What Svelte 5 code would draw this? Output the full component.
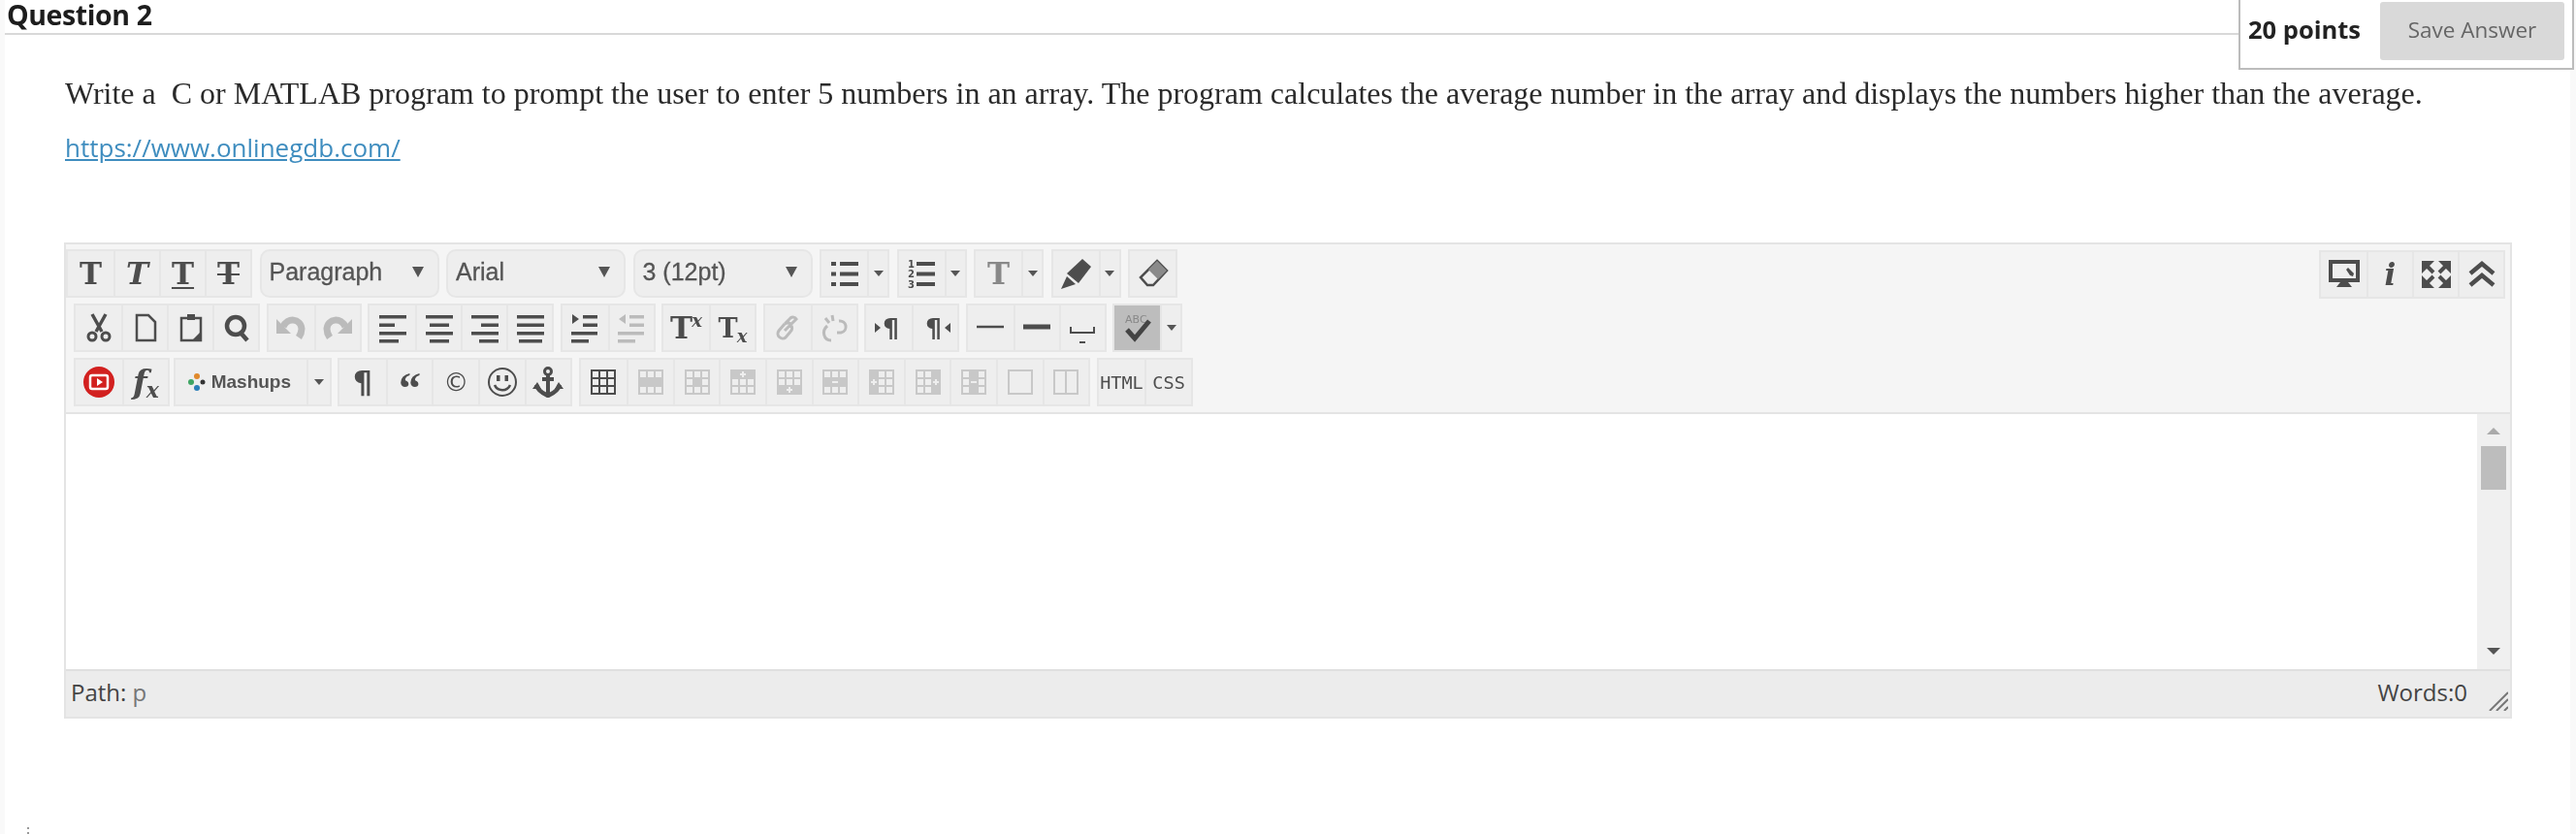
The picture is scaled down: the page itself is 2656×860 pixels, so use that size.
<script>
  const bars = (a, h = 3.5) => ({ d: a.map(([x, y, w]) => `M${x} ${y}h${w}v${h}h-${w}z`).join('') });
  const ys = [3, 11.5, 20, 28];
  const rows = (xs) => bars(xs.map(([x, w], i) => [x, ys[i], w]));
  const num = (t, x, y) => ({ t, x, y, s: 10, b: 1 });

  function grid(gray = [], sym = '') {
    const cols = [5, 13, 21], rws = [5, 13, 21];
    const cells = [];
    rws.forEach((y, r) => cols.forEach((x, c) => {
      if (!gray.includes(r * 3 + c)) cells.push(`M${x} ${y}h6v6h-6z`);
    }));
    const out = [{ d: 'M3 3h26v26H3z' }, { d: cells.join(''), f: '#eee' }];
    if (sym) out.push({ d: sym, f: '#eee' });
    return out;
  }
  const plus = (x, y) => `M${x - 1} ${y - 3}h2v2h2v2h-2v2h-2v-2h-2v-2h2z`;
  const minus = (x, y) => `M${x - 3} ${y - 1}h6v2h-6z`;

  const icons = {
    cut: [{ d: 'M9 2L19 20M23 2L13 20', w: 3.5 }, { d: 'M13 25a4 4 0 1 1-8 0a4 4 0 1 1 8 0M27 25a4 4 0 1 1-8 0a4 4 0 1 1 8 0', w: 3 }],
    page: [{ d: 'M7 3h12l7 7v19H7z', w: 2.5 }],
    paste: [{ d: 'M6 6h20v23H6z', w: 2.5 }, { d: 'M12 2h8v6h-8z' }, { d: 'M26 20v9h-9z' }],
    search: [{ d: 'M24 14a9 9 0 1 1-18 0a9 9 0 1 1 18 0M20 21l7 8', w: 4.5 }],
    undo: [{ d: 'M8 15C12 5 26 6 27 17C27 21 26 23 24 26', w: 7 }, { d: 'M1 7V22H16z' }],
    redo: [{ d: 'M24 15C20 5 6 6 5 17C5 21 6 23 8 26', w: 7 }, { d: 'M31 7V22H16z' }],
    left: [rows([[2, 28], [2, 16], [2, 28], [2, 20]])],
    center: [rows([[2, 28], [6, 20], [2, 28], [6, 20]])],
    right: [rows([[2, 28], [12, 18], [2, 28], [10, 20]])],
    justify: [rows([[2, 28], [2, 28], [2, 28], [4, 24]])],
    indent: [rows([[14, 15], [14, 15], [2, 27], [2, 18]]), { d: 'M3 2l7 5l-7 5z' }],
    outdent: [rows([[14, 15], [14, 15], [2, 27], [2, 18]]), { d: 'M10 2l-7 5l7 5z' }],
    bullets: [bars([[11, 4, 19], [11, 14.5, 19], [11, 25, 19]], 4), bars([[2, 4, 5], [2, 14.5, 5], [2, 25, 5]], 4)],
    numbers: [bars([[11, 4, 19], [11, 14.5, 19], [11, 25, 19]], 4), num('1', 2, 10), num('2', 2, 20), num('3', 2, 31)],
    marker: [{ d: 'M23 1L32 9L19 26L7 16z' }, { d: 'M7 19L16 27L7 30L1 32z' }],
    eraser: [{ d: 'M20 3L30 13L16 28H10L3 20z', w: 2.5 }, { d: 'M20 3L30 13L21 22L11 12z', f: '#8a8a8a' }],
    link: [{ d: 'M13 12L7 19a5 5 0 0 0 7 7L19 20M13 12a5 5 0 0 1 6 0M19 13L25 7a4 4 0 0 0-6-1L14 11M19 20a5 5 0 0 0 1-6M13 19L20 12', w: 3 }],
    unlink: [{ d: 'M9 14C3 19 5 29 13 29M21 9C29 8 31 19 23 21H19', w: 3 }, { d: 'M14 3L15 9M7 6L11 11', w: 3 }],
    hr: [{ d: 'M2 15h28', w: 2.5 }],
    hrb: [{ d: 'M2 15h28', w: 5 }],
    nbsp: [{ d: 'M4 15v6h24v-6', w: 2 }, { d: 'M13 31h6', w: 2 }],
    pilcrowR: [{ d: 'M1 11l6 5l-6 5z' }, { t: '¶', x: 9, y: 26, s: 27, b: 1 }],
    pilcrowL: [{ t: '¶', x: 5, y: 26, s: 27, b: 1 }, { d: 'M31 11l-6 5l6 5z' }],
    spell: [{ t: 'ABC', x: 3, y: 11, s: 11, c: '#888' }, { d: 'M5 18L13 27L28 9', w: 5 }],
    yt: [{ d: 'M32 16a16 16 0 1 1-32 0a16 16 0 1 1 32 0', f: '#d2201f' }, { d: 'M9 9h14a2 2 0 0 1 2 2v10a2 2 0 0 1-2 2H9a2 2 0 0 1-2-2V11a2 2 0 0 1 2-2z', w: 2.5, c: '#fff' }, { d: 'M14 12l6 4l-6 4z', f: '#fff' }],
    smiley: [{ d: 'M30 16a14 14 0 1 1-28 0a14 14 0 1 1 28 0', w: 2 }, { d: 'M8 19C11 26 21 26 24 19', w: 2.5 }, { d: 'M10 9h3.5v6H10zM18.5 9h3.5v6h-3.5z' }],
    anchor: [{ d: 'M19.5 5a3.5 3.5 0 1 1-7 0a3.5 3.5 0 1 1 7 0', w: 3 }, { d: 'M16 8V29M10 13h12', w: 4 }, { d: 'M4 19C6 26 12 28 16 30C20 28 26 26 28 19', w: 4.5 }, { d: 'M0 23l5-7l4 7zM32 23l-5-7l-4 7z' }],
    table: grid(),
    tRow: grid([3, 4, 5]),
    tCell: grid([4]),
    tRowB: grid([0, 1, 2], plus(16, 8)),
    tRowA: grid([6, 7, 8], plus(16, 24)),
    tRowD: grid([3, 4, 5], minus(16, 16)),
    tColB: grid([0, 3, 6], plus(8, 16)),
    tColA: grid([2, 5, 8], plus(24, 16)),
    tColD: grid([1, 4, 7], minus(16, 16)),
    square: [{ d: 'M4 4h24v24H4z', w: 2 }],
    split: [{ d: 'M4 4h24v24H4zM16 4v24', w: 2 }],
    monitor: [{ d: 'M2 3h28v19H2z', w: 4 }, { d: 'M12 24h8l4 5H8z' }, { d: 'M20 9l6 6l-1 3l-3-1l-4-6z' }],
    full: [
      { d: 'M1 2h13L1 15zM31 2H18L31 15zM1 30h13L1 17zM31 30H18L31 17z' },
      { d: 'M6 7l7 7M26 7l-7 7M6 25l7-7M26 25l-7-7', w: 4 }
    ],
    chevrons: [{ d: 'M4 15L16 5L28 15M4 27L16 17L28 27', w: 4.5 }]
  };

  const row1 = [
    { b: [{ g: 'T', c: 'sb' }, { g: 'T', c: 'si' }, { g: 'T', c: 'sb u' }, { g: 'T', c: 'sb s' }] },
    { sel: 'Paragraph' }, { sel: 'Arial' }, { sel: '3 (12pt)' },
    { b: [{ i: 'bullets' }, { a: 1 }] },
    { b: [{ i: 'numbers' }, { a: 1 }] },
    { b: [{ g: 'T', c: 'sb light' }, { a: 1 }] },
    { b: [{ i: 'marker' }, { a: 1 }] },
    { b: [{ i: 'eraser' }] }
  ];
  const row2 = [
    { b: [{ i: 'cut' }, { i: 'page' }, { i: 'paste' }, { i: 'search' }] },
    { b: [{ i: 'undo', d: 1 }, { i: 'redo', d: 1 }] },
    { b: [{ i: 'left' }, { i: 'center' }, { i: 'right' }, { i: 'justify' }] },
    { b: [{ i: 'indent' }, { i: 'outdent', d: 1 }] },
    { b: [{ g: 'T', c: 'sb', sup: 'x' }, { g: 'T', c: 'sb small', sub: 'x' }] },
    { b: [{ i: 'link', d: 1 }, { i: 'unlink', d: 1 }] },
    { b: [{ i: 'pilcrowR' }, { i: 'pilcrowL' }] },
    { b: [{ i: 'hr' }, { i: 'hrb' }, { i: 'nbsp' }] },
    { b: [{ i: 'spell', on: 1 }, { a: 1 }] }
  ];
  const row3 = [
    { b: [{ i: 'yt' }, { g: 'f', c: 'si fx', sub: 'x' }] },
    { mash: 1 },
    { b: [{ g: '¶', c: 'pil' }, { g: '“', c: 'quote' }, { g: '©', c: 'copy' }, { i: 'smiley' }, { i: 'anchor' }] },
    { b: [{ i: 'table' }, { i: 'tRow', d: 2 }, { i: 'tCell', d: 2 }, { i: 'tRowB', d: 2 }, { i: 'tRowA', d: 2 }, { i: 'tRowD', d: 2 }, { i: 'tColB', d: 2 }, { i: 'tColA', d: 2 }, { i: 'tColD', d: 2 }, { i: 'square', d: 2 }, { i: 'split', d: 2 }] },
    { b: [{ g: 'HTML', c: 'mono' }, { g: 'CSS', c: 'mono' }] }
  ];
  const sideTools = [{ i: 'monitor' }, { g: 'i', c: 'si' }, { i: 'full' }, { i: 'chevrons' }];
</script>

{#snippet icon(name)}
  <svg class="ico" viewBox="0 0 32 32" width="32" height="32">
    {#each icons[name] as p}
      {#if p.t}
        <text x={p.x} y={p.y} font-size={p.s} fill={p.c ?? 'currentColor'} font-weight={p.b ? 700 : 400} font-family="'DejaVu Sans', sans-serif">{p.t}</text>
      {:else}
        <path d={p.d} fill={p.f ?? (p.w ? 'none' : 'currentColor')} stroke={p.w ? (p.c ?? 'currentColor') : 'none'} stroke-width={p.w ?? 0} />
      {/if}
    {/each}
  </svg>
{/snippet}

{#snippet btn(x)}
  {#if x.a}
    <div class="btn arrow"><span class="tri"></span></div>
  {:else if x.i}
    <div class="btn" class:off={x.d === 1} class:off2={x.d === 2} class:on={x.on}>{@render icon(x.i)}</div>
  {:else}
    <div class="btn"><span class="g {x.c}">{x.g}</span>{#if x.sup}<span class="sup">{x.sup}</span>{/if}{#if x.sub}<span class="sub">{x.sub}</span>{/if}</div>
  {/if}
{/snippet}

{#snippet toolRow(items, cls)}
  <div class="row {cls}">
    {#each items as it}
      {#if it.sel}
        <div class="select"><span>{it.sel}</span><span class="tri big"></span></div>
      {:else if it.mash}
        <div class="group">
          <div class="btn mash">
            <svg viewBox="0 0 20 20" width="20" height="20">
              <circle cx="10" cy="4" r="3" fill="#e08a2c" />
              <circle cx="4" cy="10" r="3" fill="#3fa564" />
              <circle cx="16" cy="10" r="2.5" fill="#333" />
              <circle cx="10" cy="16" r="3" fill="#2a7fb8" />
            </svg>
            <span>Mashups</span>
          </div>
          <div class="btn arrow"><span class="tri"></span></div>
        </div>
      {:else}
        <div class="group">
          {#each it.b as x}{@render btn(x)}{/each}
        </div>
      {/if}
    {/each}
  </div>
{/snippet}

<div class="page">
  <header class="head"><h2>Question 2</h2></header>

  <aside class="points">
    <strong>20 points</strong>
    <div class="save">Save Answer</div>
  </aside>

  <section class="question">
    <p>Write a &nbsp;C or MATLAB program to prompt the user to enter 5 numbers in an array. The program calculates the average number in the array and displays the numbers higher than the average.</p>
    <a href="#top">https://www.onlinegdb.com/</a>
  </section>

  <div class="editor">
    <div class="toolbar">
      <div class="rows">
        {@render toolRow(row1, 'r1')}
        {@render toolRow(row2, 'r2')}
        {@render toolRow(row3, 'r3')}
      </div>
      <div class="group side">
        {#each sideTools as x}{@render btn(x)}{/each}
      </div>
    </div>
    <div class="body">
      <div class="area"></div>
      <div class="scroll">
        <span class="up"></span>
        <span class="thumb"></span>
        <span class="down"></span>
      </div>
    </div>
    <div class="status">
      <div class="path">Path: <span>p</span></div>
      <div class="words">Words:0</div>
      <svg class="grip" viewBox="0 0 20 20" width="20" height="20">
        <path d="M1 20L20 1M8 20L20 8M16 20L20 16" stroke="#777" stroke-width="2" fill="none" />
      </svg>
    </div>
  </div>
  <i class="dots"></i>
</div>

<style>
  :global(body) {
    margin: 0;
    background: #f9f9f9;
    overflow: hidden;
  }
  .page {
    position: relative;
    box-sizing: border-box;
    height: 860px;
    margin: 0 6px 0 5px;
    background: #fff;
    color: #333;
    font-family: "Open Sans", sans-serif;
    filter: blur(0.45px);
  }
  .head {
    height: 34px;
    border-bottom: 2px solid #d8d8d8;
  }
  h2 {
    margin: 0;
    padding-left: 2px;
    font-size: 28.5px;
    line-height: 30px;
    font-weight: 700;
    color: #1d1d1d;
    letter-spacing: -0.4px;
  }
  .points {
    position: absolute;
    top: -2px;
    right: -4px;
    box-sizing: border-box;
    width: 346px;
    height: 74px;
    border: 2px solid #bcbcbc;
    background: #fff;
    display: flex;
    align-items: flex-start;
    padding: 2px 8px 0 8px;
    justify-content: space-between;
  }
  .points strong {
    font-size: 25.5px;
    line-height: 57px;
    color: #222;
  }
  .save {
    box-sizing: border-box;
    width: 190px;
    height: 60px;
    padding-bottom: 3px;
    border-radius: 3px;
    background: #d9d9d9;
    color: #666;
    font-size: 22.5px;
    display: flex;
    align-items: center;
    justify-content: center;
  }
  .question {
    padding: 40px 0 0 62px;
    height: 214px;
    box-sizing: border-box;
  }
  .question p {
    margin: 0;
    font-family: "Liberation Serif", serif;
    font-size: 32px;
    line-height: 40px;
    color: #2a2a2a;
    white-space: nowrap;
  }
  .question a {
    display: inline-block;
    margin-top: 20px;
    font-size: 26px;
    line-height: 32px;
    color: #3f8dbf;
    text-decoration: underline;
  }
  .editor {
    margin-left: 61px;
    width: 2524px;
    box-sizing: border-box;
    border: 2px solid #e4e4e4;
  }
  .toolbar {
    display: flex;
    justify-content: space-between;
    background: #f5f5f5;
    height: 175px;
    box-sizing: border-box;
    padding: 5px 5px 0 0;
    border-bottom: 2px solid #e4e4e4;
  }
  .rows {
    display: flex;
    flex-direction: column;
    gap: 6px;
  }
  .row {
    display: flex;
    gap: 7.5px;
    height: 50px;
  }
  .r2, .r3 {
    margin-left: 8px;
    gap: 6.5px;
  }
  .r3 .group:first-child {
    margin-right: -3px;
  }
  .r3 .btn {
    width: 47.6px;
  }
  .r3 .btn.arrow {
    width: 24px;
  }
  .group {
    display: flex;
    border: 2px solid #e6e6e6;
    background: #eee;
    height: 50px;
    box-sizing: border-box;
  }
  .side {
    margin-top: 1px;
  }
  .btn {
    box-sizing: border-box;
    width: 47px;
    height: 100%;
    display: flex;
    align-items: center;
    justify-content: center;
    color: #4d4d4d;
    border-left: 2px solid #e6e6e6;
    position: relative;
    white-space: nowrap;
  }
  .btn:first-child {
    border-left: 0;
  }
  .btn.arrow {
    width: 21px;
  }
  .btn.off {
    color: #bbb;
  }
  .btn.off2 {
    color: #c8c8c8;
  }
  .btn.on {
    background: #bdbdbd;
    color: #444;
  }
  .btn.mash, .r3 .btn.mash {
    width: 135px;
    gap: 5px;
    justify-content: flex-start;
    padding-left: 12px;
    color: #555;
    font: 700 19px "Liberation Sans", sans-serif;
  }
  .tri {
    width: 0;
    height: 0;
    border-left: 5px solid transparent;
    border-right: 5px solid transparent;
    border-top: 6px solid #555;
  }
  .tri.big {
    border-left-width: 6px;
    border-right-width: 6px;
    border-top-width: 11px;
  }
  .select {
    box-sizing: border-box;
    width: 185px;
    height: 50px;
    border: 2px solid #e6e6e6;
    border-radius: 10px;
    background: #eee;
    display: flex;
    align-items: center;
    justify-content: space-between;
    padding: 0 14px 4px 8px;
    font: 25px "Liberation Sans", sans-serif;
    color: #555;
    -webkit-text-stroke: 0.3px #555;
  }
  .g {
    line-height: 1;
  }
  .sb {
    font: 700 31px "DejaVu Serif", serif;
  }
  .si {
    font: italic 700 31px "DejaVu Serif", serif;
  }
  .u {
    text-decoration: underline;
    text-decoration-thickness: 2px;
    text-underline-offset: 3px;
  }
  .s {
    text-decoration: line-through;
    text-decoration-thickness: 2px;
  }
  .light {
    color: #888;
  }
  .small {
    font-size: 27px;
  }
  .sup, .sub {
    font: italic 700 18px "DejaVu Serif", serif;
    align-self: flex-start;
    margin-top: 5px;
    margin-left: -1px;
  }
  .sub {
    align-self: flex-end;
    margin: 0 0 4px -1px;
  }
  .fx {
    font-size: 34px;
  }
  .fx + .sub {
    font-size: 22px;
    margin-bottom: 2px;
  }
  .pil {
    font: 700 32px "DejaVu Sans", sans-serif;
  }
  .quote {
    font: 700 46px/1 "Liberation Serif", serif;
    height: 34px;
    margin-top: 2px;
  }
  .copy {
    font: 26px "DejaVu Sans", sans-serif;
  }
  .mono {
    font: 400 18.5px "DejaVu Sans Mono", monospace;
    letter-spacing: 0;
  }
  .body {
    display: flex;
    height: 263px;
    background: #fff;
  }
  .area {
    flex: 1;
  }
  .scroll {
    position: relative;
    width: 34px;
    background: #f0f0f0;
  }
  .up, .down, .thumb {
    position: absolute;
  }
  .up {
    left: 10px;
    top: 14px;
    border-left: 7px solid transparent;
    border-right: 7px solid transparent;
    border-bottom: 7px solid #aaa;
  }
  .down {
    left: 10px;
    top: 241px;
    border-left: 7px solid transparent;
    border-right: 7px solid transparent;
    border-top: 7px solid #555;
  }
  .thumb {
    left: 4px;
    top: 33px;
    width: 26px;
    height: 45px;
    background: #bdbdbd;
  }
  .status {
    position: relative;
    display: flex;
    justify-content: space-between;
    align-items: center;
    box-sizing: border-box;
    height: 49px;
    padding: 0 44px 4px 5px;
    background: #ececec;
    border-top: 2px solid #e0e0e0;
    font-size: 24px;
    color: #444;
  }
  .path span {
    color: #777;
  }
  .grip {
    position: absolute;
    right: 2px;
    bottom: 6px;
  }
  .dots {
    position: absolute;
    left: 23px;
    top: 853px;
    height: 7px;
    border-left: 2px dotted #999;
  }
</style>
